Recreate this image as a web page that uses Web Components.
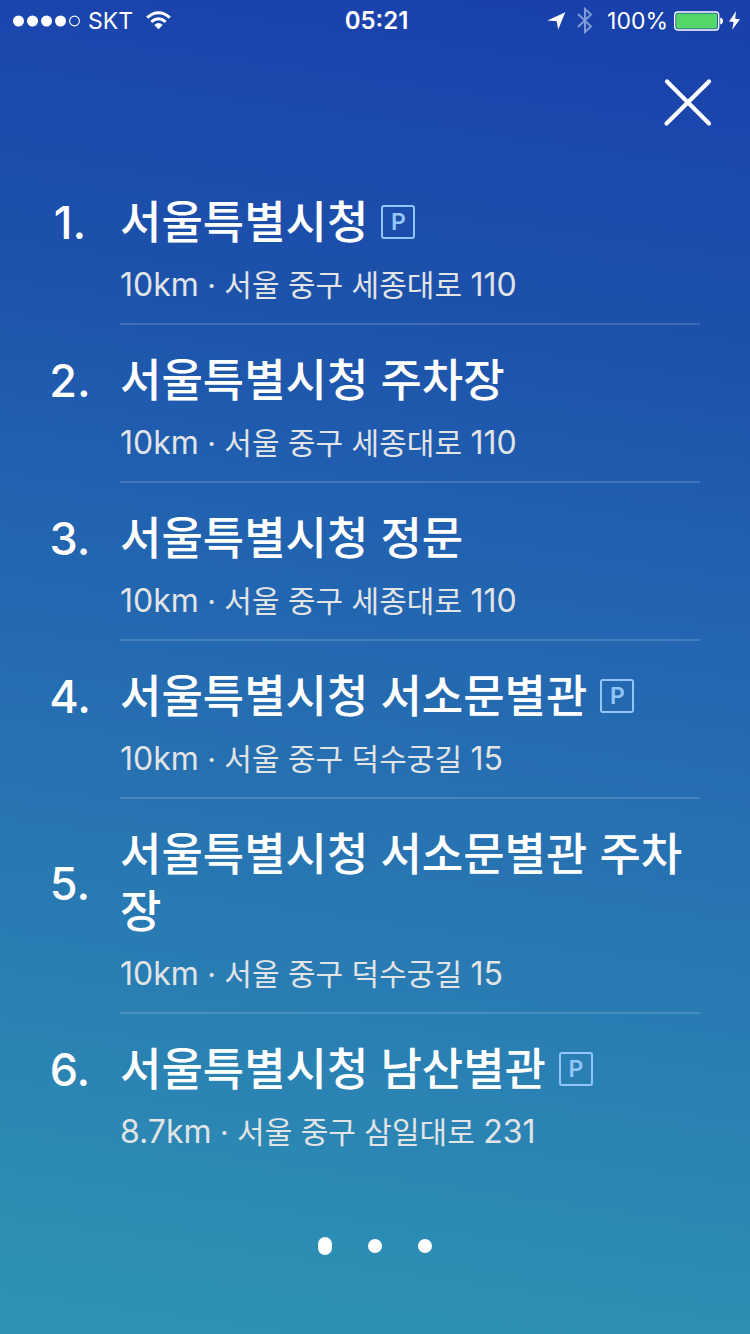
<!DOCTYPE html>
<html lang="ko">
<head>
<meta charset="utf-8">
<meta name="viewport" content="width=device-width, initial-scale=1">
<title>서울특별시청</title>
<style>
  body { margin: 0; background: #2d91b3; font-family: Inter, "Noto Sans CJK KR", sans-serif; color: #fff; }
</style>
</head>
<body>
<search-screen>
  <status-bar slot="status" carrier="SKT" time="05:21" battery="100%"></status-bar>
  <close-button slot="close"></close-button>
  <place-list></place-list>
  <page-dots slot="pager" count="3"></page-dots>
</search-screen>

<script>
class BaseElement extends HTMLElement {
  constructor() {
    super();
    this.attachShadow({ mode: 'open' });
  }
  connectedCallback() {
    this.shadowRoot.innerHTML = this.render();
  }
}

class SearchScreen extends BaseElement {
  render() {
    return `
      <style>
        :host {
          display: flex; flex-direction: column; box-sizing: border-box; min-height: 100vh;
          background: linear-gradient(188deg, #183eaa 0%, #1c49ae 12%, #1c51aa 24%, #2161b0 40%, #266fb1 57%, #2a80b3 77%, #2d90b3 94%, #2e92b4 100%);
        }
        header { display: flex; justify-content: flex-end; padding: 36px 36px 38px; }
        main { padding: 0 50px 0 20px; }
        footer { padding: 87px 0 79px; }
      </style>
      <slot name="status"></slot>
      <header><slot name="close"></slot></header>
      <main><slot></slot></main>
      <footer><slot name="pager"></slot></footer>`;
  }
}

class StatusBar extends BaseElement {
  render() {
    return `
      <style>
        :host {
          display: grid; grid-template-columns: 1fr auto 1fr; align-items: center;
          height: 41px; padding: 0 10px 0 13px; font-size: 23px; line-height: 28px;
        }
        div { display: flex; align-items: center; }
        .right { justify-content: flex-end; }
        .carrier { margin: 0 13px 0 8px; }
        .bluetooth { margin-left: 11px; }
        .battery { margin: 0 6px 0 14px; }
        .bolt { margin-left: 6px; }
        time { font-size: 24px; font-weight: 600; }
        svg { display: block; flex: none; }
      </style>
      <div>
        <svg width="67" height="12" viewBox="0 0 67 12" fill="#fff" aria-hidden="true">
          <circle cx="5.5" cy="6" r="5.5"/><circle cx="19.5" cy="6" r="5.5"/>
          <circle cx="33.5" cy="6" r="5.5"/><circle cx="47.5" cy="6" r="5.5"/>
          <circle cx="61.5" cy="6" r="4.9" fill="none" stroke="#fff" stroke-width="1.1"/>
        </svg>
        <span class="carrier">${this.getAttribute('carrier')}</span>
        <svg width="25" height="19" viewBox="0 0 25 19" fill="none" stroke="#fff" stroke-width="3" aria-hidden="true">
          <path d="M1.2 6.6Q12.5 -3 23.8 6.6"/>
          <path d="M5.3 10.8Q12.5 4.8 19.7 10.8"/>
          <path d="M8.3 14Q12.5 10 16.7 14L12.5 18.3Z" fill="#fff" stroke="none"/>
        </svg>
      </div>
      <time>${this.getAttribute('time')}</time>
      <div class="right">
        <svg width="19" height="18" viewBox="0 0 19 18" aria-hidden="true"><path d="M18.3.2L11.2 17.6L9.7 9.2L.4 8.4Z" fill="#fff"/></svg>
        <svg class="bluetooth" width="16" height="27" viewBox="0 0 16 27" fill="none" stroke="#7f9bd5" stroke-width="2" aria-hidden="true"><path d="M1 7L14 19.5L8 25V2L14 7.5L1 20"/></svg>
        <span class="battery">${this.getAttribute('battery')}</span>
        <svg width="49" height="20" viewBox="0 0 49 20" aria-hidden="true">
          <rect x=".7" y="1" width="44" height="18" rx="3" fill="none" stroke="#fff" stroke-width="1.4"/>
          <rect x="2.2" y="2.5" width="41" height="15" rx="1.5" fill="#53d769"/>
          <path d="M46.2 6.5Q49 7 49 10Q49 13 46.2 13.5Z" fill="#fff"/>
        </svg>
        <svg class="bolt" width="11" height="19" viewBox="0 0 11 19" aria-hidden="true"><path d="M7 .2L0 10.4L4.6 11L3.2 18.8L11 8.2L6.2 7.8Z" fill="#fff"/></svg>
      </div>`;
  }
}

class CloseButton extends BaseElement {
  render() {
    return `
      <style>
        :host { display: block; }
        button { display: block; padding: 0; border: 0; background: none; cursor: pointer; }
        svg { display: block; }
      </style>
      <button type="button" aria-label="닫기">
        <svg width="52" height="52" viewBox="0 0 52 52" stroke="#fff" stroke-width="4.2" stroke-linecap="round"><path d="M5 4.5L47 46.5M47 4.5L4.5 46.5"/></svg>
      </button>`;
  }
}

class ParkingBadge extends BaseElement {
  render() {
    return `
      <style>
        :host {
          display: inline-flex; align-items: center; justify-content: center; box-sizing: border-box;
          width: 34px; height: 34px; margin-left: 13px; border: 2px solid #92c5fc; border-radius: 3px;
          color: #92c5fc; font-size: 23px; line-height: 28px; font-weight: 600; vertical-align: 9px;
        }
      </style>P`;
  }
}

class PlaceItem extends BaseElement {
  render() {
    return `
      <style>
        :host { display: grid; grid-template-columns: 100px 1fr; }
        .rank { display: flex; align-items: center; justify-content: center; padding-top: 27px; }
        .rank, h2 { font-size: 45px; line-height: 57px; font-weight: 500; }
        h2 { margin: 0; padding-top: 27px; }
        p {
          grid-column: 2; margin: 0; padding: 16px 0 20px; font-size: 32px; line-height: 36px;
          color: #e2e4e6; border-bottom: 2px solid rgba(255, 255, 255, .15);
        }
        .street { font-size: 30px; }
        :host([last]) p { padding-bottom: 0; border: 0; }
      </style>
      <span class="rank">${this.getAttribute('rank')}.</span>
      <h2><slot></slot></h2>
      <p>${this.getAttribute('distance')}<span class="street"> · ${this.getAttribute('street')} </span>${this.getAttribute('number')}</p>`;
  }
}

const places = [
  ['서울특별시청', '10km', '서울 중구 세종대로', '110', true],
  ['서울특별시청 주차장', '10km', '서울 중구 세종대로', '110', false],
  ['서울특별시청 정문', '10km', '서울 중구 세종대로', '110', false],
  ['서울특별시청 서소문별관', '10km', '서울 중구 덕수궁길', '15', true],
  ['서울특별시청 서소문별관 주차장', '10km', '서울 중구 덕수궁길', '15', false],
  ['서울특별시청 남산별관', '8.7km', '서울 중구 삼일대로', '231', true]
];

class PlaceList extends BaseElement {
  render() {
    const rows = places.map(([name, distance, street, number, parking], i) => `
      <li><place-item rank="${i + 1}" distance="${distance}" street="${street}" number="${number}"${i === places.length - 1 ? ' last' : ''}>${name}${parking ? '<parking-badge></parking-badge>' : ''}</place-item></li>`).join('');
    return `
      <style>
        :host { display: block; }
        ol { margin: 0; padding: 0; list-style: none; }
      </style>
      <ol>${rows}</ol>`;
  }
}

class PageDots extends BaseElement {
  render() {
    const count = Number(this.getAttribute('count'));
    const dots = Array.from({ length: count }, (_, i) =>
      `<button type="button" aria-label="${i + 1} 페이지"${i === 0 ? ' aria-current="page"' : ''}></button>`).join('');
    return `
      <style>
        :host { display: flex; justify-content: center; align-items: center; gap: 36px; height: 18px; }
        button { width: 14px; height: 14px; padding: 0; border: 0; border-radius: 7px; background: #fff; cursor: pointer; }
        button[aria-current] { height: 18px; }
      </style>
      ${dots}`;
  }
}

customElements.define('search-screen', SearchScreen);
customElements.define('status-bar', StatusBar);
customElements.define('close-button', CloseButton);
customElements.define('parking-badge', ParkingBadge);
customElements.define('place-item', PlaceItem);
customElements.define('place-list', PlaceList);
customElements.define('page-dots', PageDots);
</script>
</body>
</html>
